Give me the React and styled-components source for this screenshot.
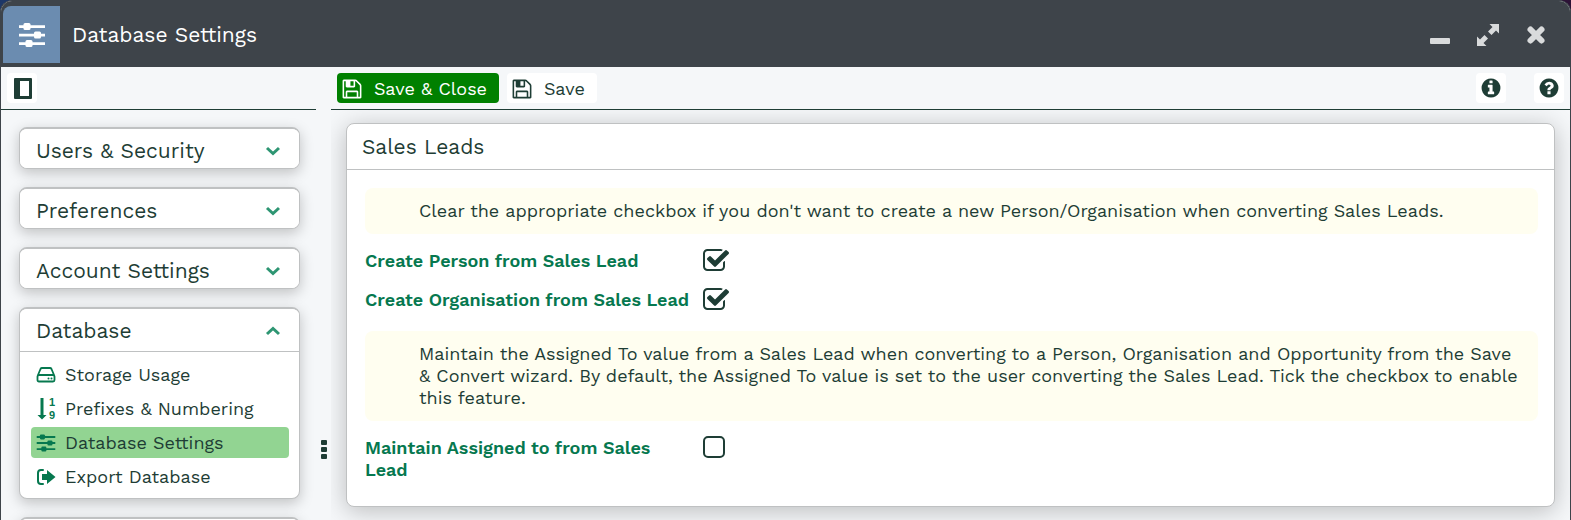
import React, { useState } from "react";
import styled, { createGlobalStyle, css } from "styled-components";

const GlobalStyle = createGlobalStyle`
  * {
    box-sizing: border-box;
  }
  html,
  body,
  #root {
    height: 100%;
  }
  body {
    margin: 0;
    background: linear-gradient(90deg, #1d3768, #2c1236);
    color: #1e3d35;
    font-family: "Work Sans", "Noto Sans", sans-serif;
    font-size: 18px;
    line-height: 22px;
  }
  button {
    font: inherit;
    color: inherit;
    border: none;
    padding: 0;
    cursor: pointer;
  }
`;

// Window frame
const Window = styled.div`
  height: 100%;
  display: flex;
  flex-direction: column;
  overflow: hidden;
  background: #f5f7f9;
  border: 1px solid #3e444a;
  border-bottom: none;
  border-radius: 12px 12px 0 0;
`;

const TitleBar = styled.header`
  flex: none;
  height: 66px;
  display: flex;
  align-items: center;
  padding: 5px 20px 4px 2px;
  background: #3e444a;
  color: #fff;
`;

const TitleIcon = styled.div`
  width: 57px;
  height: 57px;
  display: flex;
  align-items: center;
  justify-content: center;
  background: #6b8cb0;
  border-radius: 8px 0 0 0;
`;

const Title = styled.h1`
  flex: 1;
  margin: 0 12px;
  font-size: 21px;
  font-weight: 400;
`;

const WindowControls = styled.div`
  display: flex;
  gap: 20px;
`;

const WindowButton = styled.button`
  width: 28px;
  height: 28px;
  display: flex;
  align-items: center;
  justify-content: center;
  background: none;
  color: #d9dbdc;
`;

const Columns = styled.div`
  flex: 1;
  min-height: 0;
  display: flex;
`;

const Column = styled.div`
  display: flex;
  flex-direction: column;
  min-width: 0;
  ${(props) => (props.$side ? "flex: 0 0 315px;" : "flex: 1;")}
`;

const Divider = styled.div`
  flex: 0 0 15px;
  display: flex;
  align-items: center;
  justify-content: center;
  padding-top: 312px;
`;

const Toolbar = styled.div`
  flex: none;
  height: 43px;
  display: flex;
  align-items: center;
  gap: 8px;
  padding: 0 6px;
  border-bottom: 1px solid #1e3d35;
`;

const ToolButton = styled.button`
  height: 30px;
  display: flex;
  align-items: center;
  gap: 11px;
  padding: 1px 12px 0 4px;
  border-radius: 4px;
  background: ${(props) => (props.$primary ? "#008000" : "#fff")};
  color: ${(props) => (props.$primary ? "#fff" : "#1e3d35")};
`;

const IconButton = styled.button`
  width: 30px;
  height: 30px;
  display: flex;
  align-items: center;
  justify-content: center;
  border-radius: 4px;
  background: #fff;
`;

const HelpGroup = styled.div`
  margin-left: auto;
  display: flex;
  gap: 28px;
`;

const Scroll = styled.div`
  flex: 1;
  min-height: 0;
  overflow: hidden;
  padding: ${(props) => (props.$side ? "17px 16px 0 18px" : "13px 15px 0")};
`;

// Left navigation
const Section = styled.section`
  margin-bottom: 18px;
  overflow: hidden;
  background: #fff;
  border: 1px solid #bfc1c2;
  border-top-width: 2px;
  border-radius: 8px;
  box-shadow: 0 4px 14px rgba(0, 0, 0, 0.22);
`;

const SectionHeader = styled.button`
  width: 100%;
  height: 39px;
  display: flex;
  align-items: center;
  justify-content: space-between;
  padding: 4px 18px 0 16px;
  background: #fff;
  font-size: 21px;
  text-align: left;
`;

const SectionBody = styled.nav`
  display: flex;
  flex-direction: column;
  gap: 3px;
  margin-top: 3px;
  padding: 7px 10px 6px 11px;
  border-top: 1px solid #bfc1c2;
`;

const NavLink = styled.a`
  height: 31px;
  display: flex;
  align-items: center;
  gap: 9px;
  padding: 0 5px;
  border-radius: 4px;
  color: #1e3d35;
  text-decoration: none;
  ${(props) =>
    props.$active &&
    css`
      background: #92d492;
    `}
  svg {
    color: #06784f;
    flex: none;
  }
`;

// Settings panel
const Panel = styled.section`
  background: #fff;
  border: 1px solid #bfc1c2;
  border-radius: 8px;
  box-shadow: 0 4px 24px rgba(0, 0, 0, 0.24);
`;

const PanelTitle = styled.h2`
  height: 46px;
  margin: 0;
  padding: 12px 15px;
  border-bottom: 1px solid #bfc1c2;
  font-size: 21px;
  font-weight: 400;
`;

const PanelBody = styled.div`
  padding: 18px 16px 8px 18px;
`;

const Note = styled.p`
  margin: 0;
  padding: 12px 16px 12px 54px;
  border-radius: 8px;
  background: #fffef0;
`;

const Fields = styled.div`
  display: flex;
  flex-direction: column;
  gap: 11px;
  padding: 13px 0 17px;
`;

const Field = styled.div`
  display: flex;
  gap: 11px;
`;

const FieldLabel = styled.label`
  flex: 0 0 326px;
  padding-top: 3px;
  color: #06784f;
  font-weight: 600;
`;

const CheckBox = styled.span`
  position: relative;
  width: 28px;
  height: 28px;
  flex: none;
  input {
    position: absolute;
    inset: 0;
    width: 100%;
    height: 100%;
    margin: 0;
    opacity: 0;
  }
  svg {
    display: block;
  }
`;

// Icons
const Icon = ({ size = 20, box = "0 0 1792 1792", children }) => (
  <svg width={size} height={size} viewBox={box} fill="currentColor" aria-hidden="true">
    {children}
  </svg>
);

const SlidersIcon = ({ size }) => (
  <Icon size={size} box="0 0 28 28">
    <path d="M1 4.200H27V6.900H1ZM1 12.700H27V15.400H1ZM1 21.200H27V23.900H1Z" />
    <rect x="5.500" y="2" width="7" height="7" rx="1.500" />
    <rect x="16" y="10.500" width="7" height="7" rx="1.500" />
    <rect x="7.500" y="19" width="7" height="7" rx="1.500" />
  </Icon>
);

const SaveIcon = () => (
  <Icon size={22}>
    <path d="M512 1536h768v-384h-768v384zm896 0h128v-896q0-14-10-38.500t-20-34.500l-281-281q-10-10-34-20t-39-10v416q0 40-28 68t-68 28h-576q-40 0-68-28t-28-68v-416h-128v1280h128v-416q0-40 28-68t68-28h832q40 0 68 28t28 68v416zm-384-928v-320q0-13-9.500-22.500t-22.500-9.500h-192q-13 0-22.500 9.500t-9.500 22.500v320q0 13 9.500 22.500t22.500 9.500h192q13 0 22.500-9.500t9.500-22.500zm640 32v928q0 40-28 68t-68 28h-1344q-40 0-68-28t-28-68v-1344q0-40 28-68t68-28h928q40 0 88 20t76 48l280 280q28 28 48 76t20 88z" />
  </Icon>
);

const InfoIcon = () => (
  <Icon size={22}>
    <path d="M1152 1376v-160q0-14-9-23t-23-9h-96v-512q0-14-9-23t-23-9h-320q-14 0-23 9t-9 23v160q0 14 9 23t23 9h96v320h-96q-14 0-23 9t-9 23v160q0 14 9 23t23 9h448q14 0 23-9t9-23zm-128-896v-160q0-14-9-23t-23-9h-192q-14 0-23 9t-9 23v160q0 14 9 23t23 9h192q14 0 23-9t9-23zm640 416q0 209-103 385.500t-279.500 279.500-385.500 103-385.500-103-279.500-279.500-103-385.500 103-385.500 279.500-279.500 385.500-103 385.500 103 279.500 279.500 103 385.500z" />
  </Icon>
);

const HelpIcon = () => (
  <Icon size={22}>
    <path d="M1024 1376v-192q0-14-9-23t-23-9h-192q-14 0-23 9t-9 23v192q0 14 9 23t23 9h192q14 0 23-9t9-23zm256-672q0-88-55.500-163t-138.500-116-170-41q-243 0-371 213-15 24 8 42l132 100q7 6 19 6 16 0 25-12 53-68 86-92 34-24 86-24 48 0 85.500 26t37.500 59q0 38-20 61t-68 45q-63 28-115.500 86.500t-52.500 125.500v36q0 14 9 23t23 9h192q14 0 23-9t9-23q0-19 21.500-49.500t54.500-49.500q32-18 49-28.500t46-35 44.500-48 28-60.500 12.500-81zm384 192q0 209-103 385.500t-279.500 279.500-385.500 103-385.500-103-279.500-279.500-103-385.500 103-385.500 279.500-279.500 385.500-103 385.500 103 279.500 279.500 103 385.500z" />
  </Icon>
);

const CheckedIcon = () => (
  <Icon size={28}>
    <path d="M1472 930v318q0 119-84.500 203.500t-203.500 84.500h-832q-119 0-203.500-84.500t-84.500-203.500v-832q0-119 84.500-203.500t203.500-84.500h832q63 0 117 25 15 7 18 23 3 17-9 29l-49 49q-10 10-23 10-3 0-9-2-23-6-45-6h-832q-66 0-113 47t-47 113v832q0 66 47 113t113 47h832q66 0 113-47t47-113v-254q0-13 9-22l64-64q10-10 23-10 7 0 12 2 20 8 20 29zm231-489l-814 814q-24 24-57 24t-57-24l-430-430q-24-24-24-57t24-57l110-110q24-24 57-24t57 24l263 263 647-647q24-24 57-24t57 24l110 110q24 24 24 57t-24 57z" />
  </Icon>
);

const UncheckedIcon = () => (
  <Icon size={28} box="0 0 28 28">
    <rect x="2" y="3" width="20" height="20" rx="4" fill="none" stroke="currentColor" strokeWidth="2" />
  </Icon>
);

const Chevron = ({ up }) => (
  <svg width="16" height="10" viewBox="0 0 16 10" fill="none" stroke="#2e9673" strokeWidth="3" aria-hidden="true">
    <path d={up ? "M2 8L8 2.500L14 8" : "M2 2L8 7.500L14 2"} />
  </svg>
);

const StorageIcon = () => (
  <Icon box="0 0 20 20">
    <path
      d="M2 10L4.500 4Q5 3 6 3H14Q15 3 15.500 4L18 10M3 10H17Q18.500 10 18.500 11.500V15Q18.500 16.500 17 16.500H3Q1.500 16.500 1.500 15V11.500Q1.500 10 3 10Z"
      fill="none"
      stroke="currentColor"
      strokeWidth="1.800"
    />
    <circle cx="12.500" cy="13.500" r="1" />
    <circle cx="15.500" cy="13.500" r="1" />
  </Icon>
);

const SortIcon = () => (
  <svg width="20" height="26" viewBox="0 0 20 26" fill="currentColor" aria-hidden="true">
    <path d="M4.500 2H7.500V19H10.500L6 23.500L1.500 19H4.500Z" />
    <text x="13" y="10" fontFamily="Liberation Sans" fontSize="11" fontWeight="700">
      1
    </text>
    <text x="13" y="23" fontFamily="Liberation Sans" fontSize="11" fontWeight="700">
      9
    </text>
  </svg>
);

const ExportIcon = () => (
  <Icon box="0 0 20 20">
    <path d="M7 3H5Q2 3 2 6V14Q2 17 5 17H7" fill="none" stroke="currentColor" strokeWidth="2" strokeLinecap="round" />
    <path d="M6 7H11V3L19.500 10L11 17V13H6Z" />
  </Icon>
);

const SECTIONS = ["Users & Security", "Preferences", "Account Settings"];

const LINKS = [
  { label: "Storage Usage", icon: <StorageIcon /> },
  { label: "Prefixes & Numbering", icon: <SortIcon /> },
  { label: "Database Settings", icon: <SlidersIcon size={20} />, active: true },
  { label: "Export Database", icon: <ExportIcon /> },
];

const CheckField = ({ id, label, initial }) => {
  const [checked, setChecked] = useState(initial);
  return (
    <Field>
      <FieldLabel htmlFor={id}>{label}</FieldLabel>
      <CheckBox>
        {checked ? <CheckedIcon /> : <UncheckedIcon />}
        <input
          id={id}
          type="checkbox"
          checked={checked}
          onChange={(e) => setChecked(e.target.checked)}
        />
      </CheckBox>
    </Field>
  );
};

const App = () => {
  return (
    <>
      <GlobalStyle />
      <Window>
        <TitleBar>
          <TitleIcon>
            <SlidersIcon size={28} />
          </TitleIcon>
          <Title>Database Settings</Title>
          <WindowControls>
            <WindowButton aria-label="Minimise">
              <Icon size={28} box="0 0 28 28">
                <rect x="4" y="17" width="20" height="6" rx="1" />
              </Icon>
            </WindowButton>
            <WindowButton aria-label="Expand">
              <Icon size={28} box="0 0 28 28">
                <path d="M15.500 3H25V12.500L22 9.500L17.500 14L14 10.500L18.500 6ZM12.500 25H3V15.500L6 18.500L10.500 14L14 17.500L9.500 22Z" />
              </Icon>
            </WindowButton>
            <WindowButton aria-label="Close">
              <Icon size={28} box="0 0 28 28">
                <path d="M8.500 8.500L19.500 19.500M19.500 8.500L8.500 19.500" stroke="currentColor" strokeWidth="6" strokeLinecap="round" />
              </Icon>
            </WindowButton>
          </WindowControls>
        </TitleBar>
        <Columns>
          <Column $side>
            <Toolbar>
              <IconButton aria-label="Toggle side panel">
                <Icon size={22} box="0 0 22 22">
                  <path fillRule="evenodd" d="M4 1H20Q21 1 21 2V21Q21 22 20 22H4Q3 22 3 21V2Q3 1 4 1ZM9 4V19H18V4Z" />
                </Icon>
              </IconButton>
            </Toolbar>
            <Scroll $side>
              {SECTIONS.map((name) => (
                <Section key={name}>
                  <SectionHeader>
                    {name}
                    <Chevron />
                  </SectionHeader>
                </Section>
              ))}
              <Section>
                <SectionHeader>
                  Database
                  <Chevron up />
                </SectionHeader>
                <SectionBody>
                  {LINKS.map((link) => (
                    <NavLink key={link.label} href="#" $active={link.active}>
                      {link.icon}
                      {link.label}
                    </NavLink>
                  ))}
                </SectionBody>
              </Section>
              <Section>
                <SectionHeader aria-label="More" />
              </Section>
            </Scroll>
          </Column>
          <Divider>
            <svg width="6" height="20" fill="currentColor" aria-hidden="true">
              <rect width="6" height="5" rx="1" />
              <rect y="7" width="6" height="5" rx="1" />
              <rect y="14" width="6" height="5" rx="1" />
            </svg>
          </Divider>
          <Column>
            <Toolbar>
              <ToolButton $primary>
                <SaveIcon />
                Save &amp; Close
              </ToolButton>
              <ToolButton>
                <SaveIcon />
                Save
              </ToolButton>
              <HelpGroup>
                <IconButton aria-label="Information">
                  <InfoIcon />
                </IconButton>
                <IconButton aria-label="Help">
                  <HelpIcon />
                </IconButton>
              </HelpGroup>
            </Toolbar>
            <Scroll>
              <Panel>
                <PanelTitle>Sales Leads</PanelTitle>
                <PanelBody>
                  <Note>
                    Clear the appropriate checkbox if you don't want to create a
                    new Person/Organisation when converting Sales Leads.
                  </Note>
                  <Fields>
                    <CheckField id="person" label="Create Person from Sales Lead" initial={true} />
                    <CheckField id="org" label="Create Organisation from Sales Lead" initial={true} />
                  </Fields>
                  <Note>
                    Maintain the Assigned To value from a Sales Lead when
                    converting to a Person, Organisation and Opportunity from
                    the Save &amp; Convert wizard. By default, the Assigned To
                    value is set to the user converting the Sales Lead. Tick the
                    checkbox to enable this feature.
                  </Note>
                  <Fields>
                    <CheckField id="assigned" label="Maintain Assigned to from Sales Lead" initial={false} />
                  </Fields>
                </PanelBody>
              </Panel>
            </Scroll>
          </Column>
        </Columns>
      </Window>
    </>
  );
};

export default App;
